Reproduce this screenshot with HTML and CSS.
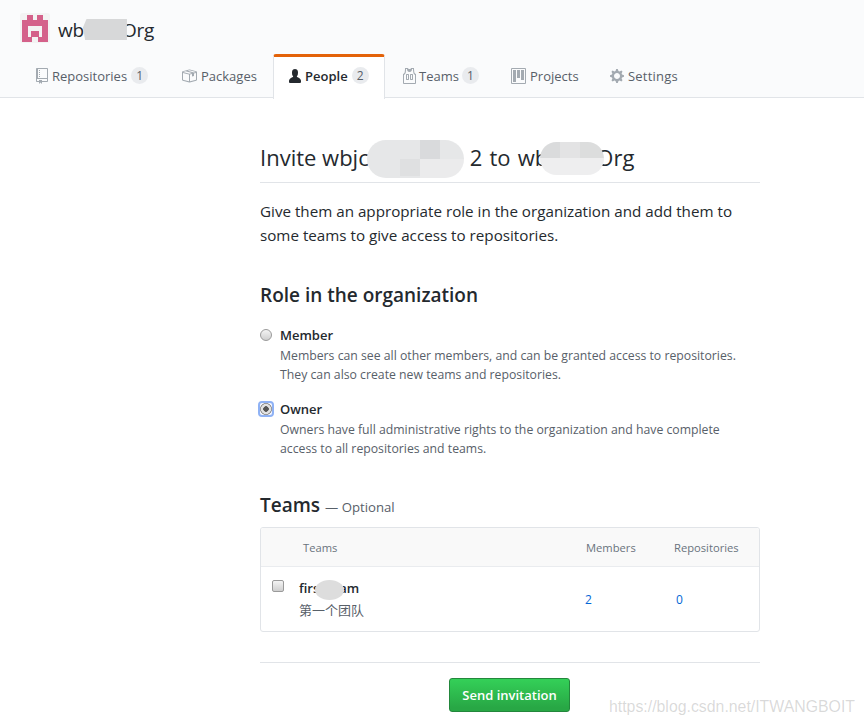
FILE: index.html
```html
<!DOCTYPE html>
<html lang="en">
<head>
<meta charset="utf-8">
<title>Invite member</title>
<link rel="stylesheet" href="styles.css">
</head>
<body>
<header class="org-head">
  <div class="org-title">
    <span class="avatar">
      <svg width="30" height="30" viewBox="0 0 30 30"><path fill="#d4618a" fill-rule="evenodd" d="M2 7V29H12V24H18V29H28V7H23V2H17V7H13V2H7V7ZM8 13H22V24H19V18H11V24H8Z"/></svg>
    </span>
    <h1 class="org-name">wb<span class="mask mask-org"></span>Org</h1>
  </div>
  <nav class="tabs">
    <a class="tab">
      <svg class="ico" width="12" height="16" viewBox="0 0 12 16"><path fill-rule="evenodd" d="M4 9H3V8h1v1zm0-3H3v1h1V6zm0-2H3v1h1V4zm0-2H3v1h1V2zm8-1v12c0 .55-.45 1-1 1H6v2l-1.5-1.5L3 16v-2H1c-.55 0-1-.45-1-1V1c0-.55.45-1 1-1h10c.55 0 1 .45 1 1zm-1 10H1v2h2v-1h3v1h5v-2zm0-10H2v9h9V1z"/></svg>
      <span>Repositories</span><span class="count">1</span>
    </a>
    <a class="tab">
      <svg class="ico" width="16" height="16" viewBox="0 0 16 16"><path fill-rule="evenodd" d="M1 4.27v7.47c0 .45.3.84.75.97l6.5 1.73c.16.05.34.05.5 0l6.5-1.73c.45-.13.75-.52.75-.97V4.27c0-.45-.3-.84-.75-.97l-6.5-1.74a1.4 1.4 0 0 0-.5 0L1.75 3.3c-.45.13-.75.52-.75.97zm7 9.09l-6-1.59V5l6 1.61v6.75zM2 4l2.5-.67L11 5.06l-2.5.67L2 4zm13 7.77l-6 1.59V6.61l2-.55V8.5l2-.53V5.53L15 5v6.77zm-2-7.24L6.5 2.8l2-.53L15 4l-2 .53z"/></svg>
      <span>Packages</span>
    </a>
    <a class="tab tab-active">
      <svg class="ico" width="12" height="16" viewBox="0 0 12 16"><path d="M12 14.002a.998.998 0 0 1-.998.998H1.001A1 1 0 0 1 0 13.999V13c0-2.633 4-4 4-4s.229-.409 0-1c-.841-.62-.944-1.59-1-4 .173-2.413 1.867-3 3-3s2.827.586 3 3c-.056 2.41-.159 3.38-1 4-.229.59 0 1 0 1s4 1.367 4 4v1.002z"/></svg>
      <span>People</span><span class="count">2</span>
    </a>
    <a class="tab">
      <svg class="ico" width="15" height="16" viewBox="0 0 15 16"><path fill-rule="evenodd" d="M4.5 6l-.5.5v5l.5.5h2l.5-.5v-5L6.5 6h-2zM6 11H5V7h1v4zm6.27-7.25C12.05 2.37 11.96 1.12 12 0H9.02c0 .27-.13.48-.39.69-.25.2-.63.3-1.13.3-.5 0-.88-.09-1.13-.3-.23-.2-.36-.42-.36-.69H3c.05 1.13-.03 2.38-.25 3.75C2.55 5.13 1.95 5.88 1 6v9c.02.27.11.48.31.69.2.21.42.3.69.31h11c.27-.02.48-.11.69-.31.21-.2.3-.42.31-.69V6c-.95-.13-1.53-.88-1.75-2.25h.02zM13 15H2V7c.89-.5 1.48-1.25 1.72-2.25S4.03 2.5 4 1h1c-.02.78.16 1.47.52 2.06.36.58 1.02.89 2 .94.98-.02 1.64-.33 2-.94.36-.59.5-1.28.48-2.06h1c.02 1.42.13 2.55.33 3.38.2.81.69 2 1.67 2.63v8V15zM8.5 6l-.5.5v5l.5.5h2l.5-.5v-5l-.5-.5h-2zm1.5 5H9V7h1v4z"/></svg>
      <span>Teams</span><span class="count">1</span>
    </a>
    <a class="tab">
      <svg class="ico" width="15" height="16" viewBox="0 0 15 16"><path fill-rule="evenodd" d="M10 12h3V2h-3v10zm-4-2h3V2H6v8zm-4 4h3V2H2v12zm-1 1h13V1H1v14zM14 0H1a1 1 0 0 0-1 1v14a1 1 0 0 0 1 1h13a1 1 0 0 0 1-1V1a1 1 0 0 0-1-1z"/></svg>
      <span>Projects</span>
    </a>
    <a class="tab">
      <svg class="ico" width="14" height="16" viewBox="0 0 14 16"><path fill-rule="evenodd" d="M14 8.77v-1.6l-1.94-.64-.45-1.09.88-1.84-1.13-1.13-1.81.91-1.09-.45-.69-1.92h-1.6l-.63 1.94-1.11.45-1.84-.88-1.13 1.13.91 1.81-.45 1.09L0 7.23v1.59l1.94.64.45 1.09-.88 1.84 1.13 1.13 1.81-.91 1.09.45.69 1.92h1.59l.63-1.94 1.11-.45 1.84.88 1.13-1.13-.92-1.81.47-1.09L14 8.75v.02zM7 11c-1.66 0-3-1.34-3-3s1.34-3 3-3 3 1.34 3 3-1.34 3-3 3z"/></svg>
      <span>Settings</span>
    </a>
  </nav>
</header>

<main class="content">
  <h2 class="page-title">Invite wbjc<span class="mask mask-user"></span><span class="title-mid">2 to wb</span><span class="mask mask-target"></span>Org</h2>
  <p class="lead">Give them an appropriate role in the organization and add them to some teams to give access to repositories.</p>

  <h3 class="section-title">Role in the organization</h3>

  <div class="role">
    <input class="radio" type="radio" name="role">
    <div class="role-text">
      <strong class="role-name">Member</strong>
      <p class="note">Members can see all other members, and can be granted access to repositories.<br>They can also create new teams and repositories.</p>
    </div>
  </div>
  <div class="role">
    <input class="radio radio-focus" type="radio" name="role" checked>
    <div class="role-text">
      <strong class="role-name">Owner</strong>
      <p class="note">Owners have full administrative rights to the organization and have complete<br>access to all repositories and teams.</p>
    </div>
  </div>

  <h3 class="section-title teams-title">Teams <span class="optional">— Optional</span></h3>

  <div class="team-table">
    <div class="team-head">
      <span></span>
      <span>Teams</span>
      <span>Members</span>
      <span>Repositories</span>
    </div>
    <div class="team-row">
      <input class="check" type="checkbox">
      <div class="team-info">
        <strong class="team-name">firs<span class="mask mask-team"></span>am</strong>
        <div class="team-desc">第一个团队</div>
      </div>
      <a class="num">2</a>
      <a class="num num-repos">0</a>
    </div>
  </div>

  <div class="actions">
    <button class="btn" type="button">Send invitation</button>
  </div>
</main>
<div class="watermark">https://blog.csdn.net/ITWANGBOIT</div>
</body>
</html>
```
FILE: styles.css
```css
* { box-sizing: border-box; }
html, body { margin: 0; padding: 0; }
body {
  position: relative;
  height: 725px;
  overflow: hidden;
  background: #fff;
  color: #24292e;
  font-family: "Open Sans", "Noto Sans CJK SC", sans-serif;
  font-size: 14px;
}
.org-head {
  height: 98px;
  background: #fafbfc;
  border-bottom: 1px solid #e1e4e8;
  padding: 13px 0 0 20px;
}
.org-title { display: flex; align-items: center; height: 30px; gap: 8px; }
.avatar { width: 30px; height: 30px; background: #f3f3f3; border-radius: 3px; display: block; }
.avatar svg { display: block; }
.org-name { margin: 0; padding-top: 3px; font-size: 19px; font-weight: 400; letter-spacing: -0.2px; color: #24292e; display: flex; align-items: center; }
.mask { display: inline-block; vertical-align: middle; position: relative; z-index: 1; }
.mask-org { width: 44px; height: 21px; background: #d7d8d9; margin-left: -1px; margin-right: -5px; clip-path: polygon(8% 0, 100% 0, 100% 100%, 5% 100%, 0 40%); }
.tabs { display: flex; margin-top: 11px; height: 44px; }
.tab {
  display: flex;
  align-items: center;
  height: 45px;
  padding-bottom: 2px;
  font-size: 13px;
  color: #586069;
}
.tab .ico { fill: #a3aab1; margin-right: 4px; flex: none; }
.tab:nth-child(1) { margin-left: 16px; width: 145px; }
.tab:nth-child(2) { width: 92px; }
.tab:nth-child(3) { width: 112px; padding: 0 0 5px 15px; }
.tab:nth-child(4) { margin-left: 17px; width: 109px; }
.tab:nth-child(4) .ico { margin-right: 2px; }
.tab:nth-child(4) .count { margin-left: 3px; }
.tab:nth-child(5) { width: 99px; }
.tab:nth-child(6) { letter-spacing: 0.2px; }
.tab-active {
  background: #fff;
  color: #24292e;
  font-weight: 600;
  border: 1px solid #e1e4e8;
  border-top: 3px solid #e36209;
  border-bottom: 0;
  border-radius: 3px 3px 0 0;
  position: relative;
  z-index: 1;
}
.tab-active .ico { fill: #24292e; }
.count {
  margin-left: 4px;
  min-width: 17px;
  height: 17px;
  border-radius: 9px;
  background: #e9ebee;
  color: #586069;
  font-size: 12px;
  font-weight: 400;
  line-height: 17px;
  text-align: center;
}
.content { width: 500px; margin-left: 260px; }
.page-title {
  margin: 0;
  height: 85px;
  padding-top: 44px;
  font-size: 22px;
  font-weight: 400;
  line-height: 30px;
  border-bottom: 1px solid #e1e4e8;
  white-space: nowrap;
}
.title-mid { word-spacing: 1.5px; }
.mask-user {
  width: 97px;
  height: 38px;
  margin: -3px 6px 0 -2px;
  border-radius: 19px;
  background:
    linear-gradient(#d9dadc, #d9dadc) 53px 0 / 20px 19px no-repeat,
    linear-gradient(#dfe0e1, #dfe0e1) 33px 19px / 20px 17px no-repeat,
    linear-gradient(#ebebec, #ebebec) 53px 19px / 44px 19px no-repeat,
    #e6e7e8;
}
.mask-target {
  width: 64px;
  height: 33px;
  margin: -3px -8px 0 -8px;
  border-radius: 17px;
  background:
    linear-gradient(#dadbdc, #dadbdc) 0 0 / 20px 16px no-repeat,
    linear-gradient(#e3e3e4, #e3e3e4) 20px 0 / 20px 16px no-repeat,
    linear-gradient(#dcdddd, #dcdddd) 40px 0 / 24px 16px no-repeat,
    #eeeeef;
}
.lead { margin: 16px 0 0; font-size: 15.2px; line-height: 24px; width: 490px; }
.section-title { margin: 0; font-size: 19px; font-weight: 600; line-height: 26px; }
.lead + .section-title { margin-top: 35px; }
.role { display: flex; margin-top: 16px; }
.section-title + .role { margin-top: 18px; }
.radio {
  appearance: none;
  flex: none;
  width: 12px;
  height: 12px;
  margin: 3px 8px 0 0;
  border: 1px solid #9a9a9a;
  border-radius: 50%;
  background: linear-gradient(#f4f4f4, #cfcfcf);
}
.radio-focus {
  border: 0;
  border-radius: 2px;
  background: radial-gradient(circle, #555 0 2.5px, #e2e2e2 3px 4.8px, #9a9a9a 5.2px 5.8px, #f4f7ff 6.2px);
  outline: 2px solid #8fb2f5;
}
.role-name { display: block; font-size: 13px; font-weight: 600; line-height: 18px; }
.note { margin: 2px 0 0; font-size: 12.25px; line-height: 19px; color: #586069; white-space: nowrap; }
.teams-title { margin-top: 34px; }
.optional { font-size: 13.2px; font-weight: 400; color: #586069; }
.team-table { margin-top: 7px; height: 105px; border: 1px solid #e1e4e8; border-radius: 3px; overflow: hidden; }
.team-head, .team-row { display: grid; grid-template-columns: 42px 283px 88px 1fr; }
.team-head {
  height: 39px;
  align-items: center;
  background: #f9f9f9;
  border-bottom: 1px solid #eaecef;
  font-size: 11.2px;
  color: #6a737d;
}
.team-row { height: 64px; align-items: start; }
.check {
  appearance: none;
  width: 12px;
  height: 12px;
  margin: 13px 0 0 11px;
  border: 1px solid #9a9a9a;
  border-radius: 2px;
  background: linear-gradient(#f4f4f4, #cfcfcf);
}
.team-info { margin: 11px 0 0 -4px; }
.team-name { display: block; font-size: 13px; font-weight: 600; line-height: 20px; }
.mask-team { width: 29px; height: 20px; border-radius: 50%; background: #dddddd; margin: 0 -5px 0 -4px; }
.team-desc { font-size: 13px; line-height: 20px; color: #586069; }
.num { margin: 24px 0 0 -1px; font-size: 12px; line-height: 17px; color: #0366d6; }
.num-repos { margin-left: 2px; }
.actions {
  margin-top: 30px;
  padding-top: 15px;
  border-top: 1px solid #e1e4e8;
  display: flex;
  justify-content: center;
}
.btn {
  width: 121px;
  height: 34px;
  margin-left: -1px;
  padding: 0;
  border: 1px solid #23873c;
  border-radius: 3px;
  background: linear-gradient(#34d058, #28a745 90%);
  color: #fff;
  font-family: inherit;
  font-size: 13px;
  font-weight: 600;
}
.watermark {
  position: absolute;
  left: 609px;
  top: 697px;
  font-family: "Liberation Sans", sans-serif;
  font-size: 15.85px;
  line-height: 20px;
  color: rgba(120, 120, 120, 0.28);
  white-space: nowrap;
}
```
